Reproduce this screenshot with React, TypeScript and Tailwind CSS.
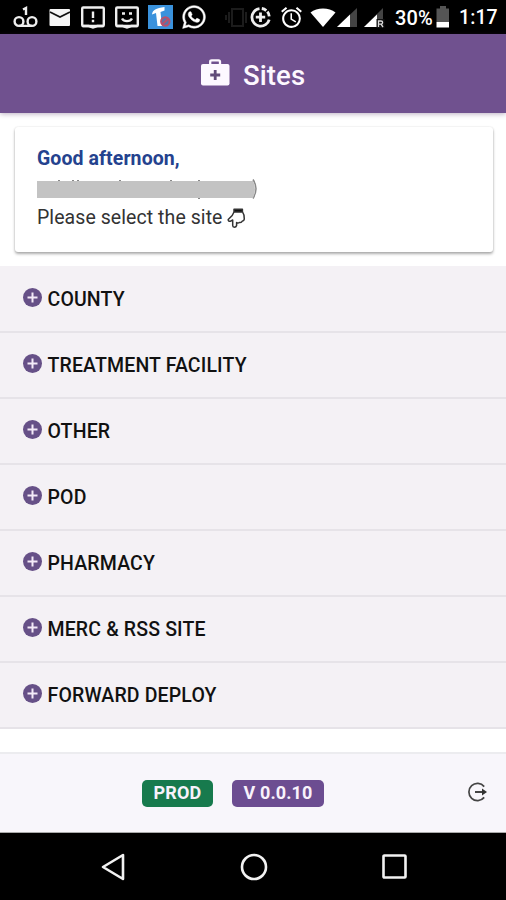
import React from "react";
import { FaWhatsapp } from "react-icons/fa";
import { MdAlarm } from "react-icons/md";

const sites = [
  "COUNTY",
  "TREATMENT FACILITY",
  "OTHER",
  "POD",
  "PHARMACY",
  "MERC & RSS SITE",
  "FORWARD DEPLOY",
];

function StatusBar() {
  return (
    <div className="flex h-[34px] shrink-0 items-center bg-black pl-[13px] text-white">
      <svg className="w-[25px] shrink-0" height="34" viewBox="0 0 25 34" fill="none" stroke="#eee" strokeWidth="2.4">
        <circle cx="6" cy="21.5" r="4.4" />
        <circle cx="19" cy="21.5" r="4.4" />
        <path d="M6 25.900h13M10 9.500l3-1.500v7" />
      </svg>
      <svg className="ml-[11px] w-[22px] shrink-0" height="34" viewBox="0 0 22 34">
        <rect x="0.5" y="9" width="20.5" height="17" rx="1" fill="#f5f5f5" />
        <path d="M1 12l10 5 10-5" stroke="#111" strokeWidth="1.8" fill="none" />
      </svg>
      <svg className="ml-[10px] w-[24px] shrink-0" height="34" viewBox="0 0 24 34" fill="none" stroke="#eee" strokeWidth="2.4">
        <rect x="1.2" y="7.500" width="21.600" height="18.500" rx="1" />
        <path d="M1.200 26h6.500l4.300 1.500 4.300-1.500h6.500" fill="#eee" />
        <path d="M12 11.500v6.500M12 19.800v2.500" />
      </svg>
      <svg className="ml-[10px] w-[24px] shrink-0" height="34" viewBox="0 0 24 34" fill="none" stroke="#eee" strokeWidth="2.4">
        <rect x="1.2" y="7.500" width="21.600" height="18.500" rx="1" />
        <path d="M1.200 26h6.500l4.300 1.500 4.300-1.500h6.500" fill="#eee" />
        <path d="M7 13.500h3M14 13.500h3M7 18.500c2 3.500 8 3.500 10 0" />
      </svg>
      <svg className="ml-[9px] w-[25px] shrink-0" height="34" viewBox="0 0 25 34">
        <rect y="5" width="25" height="24" fill="#3a92dc" />
        <path d="M4 14.500c.500-4.500 4-6.500 12.500-7.500v3.500l-4 1.500 1.500 14H9.500L8 13z" fill="#fff" />
        <circle cx="17.300" cy="21.500" r="4.200" fill="#5376ad" stroke="#b9506c" strokeWidth="2" />
        <path d="M14.500 24l5.500-5" stroke="#b9506c" strokeWidth="2" />
      </svg>
      <FaWhatsapp className="ml-[8px] shrink-0" size={26} stroke="currentColor" strokeWidth={10} />
      <svg className="ml-[18px] w-[24px] shrink-0" height="34" viewBox="0 0 24 34" fill="none" stroke="#1c1c1c" strokeWidth="2">
        <rect x="7" y="9" width="11" height="17" />
        <path d="M4 12v11M21 12v11M1 15v5" />
      </svg>
      <svg className="w-[22px] shrink-0" height="34" viewBox="0 0 22 34" fill="none" stroke="#eee" strokeWidth="2.8">
        <path d="M10.500 8.600a8.800 8.800 0 1 0 9.700 11" />
        <path d="M12.800 8.500a8.800 8.800 0 0 1 7.500 8.600" strokeDasharray="5 1.500" />
        <path d="M11.500 12.500v9.400M6.800 17.200h9.400" strokeWidth="2.800" />
      </svg>
      <MdAlarm className="ml-[8px] shrink-0" size={25} />
      <svg className="ml-[6px] w-[26px] shrink-0" height="34" viewBox="0 0 26 34">
        <path d="M0.500 12.500C7 7 19 7 25.500 12.500L13 27z" fill="#fff" />
      </svg>
      <svg className="ml-[1px] w-[21px] shrink-0" height="34" viewBox="0 0 21 34">
        <path d="M0 27L20 8v19z" fill="#444" />
        <path d="M0 27L13 14.600V27z" fill="#fff" />
      </svg>
      <svg className="ml-[6px] w-[22px] shrink-0" height="34" viewBox="0 0 22 34">
        <path d="M0 27L19 8v19z" fill="#444" />
        <path d="M0 27L13 14.600V27z" fill="#fff" />
        <rect x="12.500" y="19" width="8" height="9" fill="#111" />
        <path d="M14.500 27v-6h2.500a1.500 1.500 0 0 1 0 3.200h-2.300M17 24.200l2 2.800" fill="none" stroke="#ddd" strokeWidth="1.300" />
      </svg>
      <span className="ml-[9px] w-[39px] whitespace-nowrap pt-[2px] text-[20px] font-medium leading-[34px] tracking-[0.1px]">30%</span>
      <svg className="ml-[2px] w-[14px] shrink-0" height="34" viewBox="0 0 14 34">
        <path d="M4 6h6v2.500h3V22H0.500V8.500H4z" fill="#555" />
        <path d="M0.500 22H13v5.500H0.500z" fill="#fff" />
      </svg>
      <span className="ml-[9px] whitespace-nowrap pt-[2px] text-[19.500px] font-medium leading-[34px] tracking-[0.100px]">1:17</span>
    </div>
  );
}

function Header() {
  return (
    <header className="z-10 flex h-[79px] shrink-0 items-center bg-[#70518f] pl-[201px] pt-[4px] text-[#fdf8ff] shadow-[0_1px_5px_rgba(60,30,80,0.35)]">
      <svg width="29" height="27" viewBox="0 0 29 27" className="-mt-[6px]">
        <path d="M9.200 6V2.800Q9.200 1.300 10.700 1.300h6.800Q19 1.300 19 2.800V6" fill="none" stroke="currentColor" strokeWidth="2.300" />
        <rect y="5" width="28.500" height="21.500" rx="2" fill="currentColor" />
        <path d="M14.200 11v10M9.200 16h10" stroke="#604b79" strokeWidth="2.800" />
      </svg>
      <h1 className="ml-[13px] text-[27.500px] font-medium leading-8 tracking-[0.1px]">Sites</h1>
    </header>
  );
}

function GreetingCard() {
  return (
    <section className="ml-[15px] mr-[13px] mt-[14px] h-[125px] shrink-0 rounded-[3px] bg-white pl-[22px] pt-[17px] text-[19.500px] leading-[29px] text-[#333] shadow-[0_2px_3px_rgba(0,0,0,0.32),0_0_2px_rgba(0,0,0,0.12)]">
      <p className="text-[19.500px] font-bold leading-[29px] tracking-[0.080px] text-[#24428e]">Good afternoon,</p>
      <svg width="222" height="22" viewBox="0 0 222 22" className="mt-[6px] block">
        <path d="M216 0.500q6 9 0 19" fill="none" stroke="#888" strokeWidth="1.500" />
        <path d="M21 1.500h2M35 1.500h2M40 1.500h2M82 1.500h2M133 1.500h2M161 1.500h2M161 19.500h2" stroke="#888" />
        <rect y="2" width="216" height="17" fill="#c3c3c3" />
        <path d="M216 2q4 8 0 17z" fill="#c3c3c3" />
      </svg>
      <p className="flex items-center pt-[2px]">
        <span className="whitespace-nowrap tracking-[0.070px]">Please select the site</span>
        <svg width="19" height="20" viewBox="0 0 19 20" className="ml-[4px]" fill="none" stroke="#333" strokeWidth="1.500" strokeLinejoin="round">
          <path d="M7 4L5.200 7.500 1.200 11.500q0 2 2 1.800l2.500-1.300v5.500q0 1.700 1.700 1.700T9.600 17.500V14.500q1.500 1 2.800 0 1.800.200 2.700-1.200 2-.500 2.200-2.200.500-4-1.700-7" />
          <path d="M7 1.200h8.400V4H7z" fill="#111" />
        </svg>
      </p>
    </section>
  );
}

function SiteRow({ name }: { name: string }) {
  return (
    <li className="flex h-[66px] items-center border-b-2 border-[#e6e3e8] pl-[23px]">
      <svg width="19" height="19" viewBox="0 0 19 19" className="-mt-[3px]">
        <circle cx="9.500" cy="9.500" r="9.500" fill="#665087" />
        <path d="M9.500 4.500v10M4.500 9.500h10" stroke="#f3eaf8" strokeWidth="2" />
      </svg>
      <span className="ml-[5.500px] pt-[2px] text-[19.500px] font-medium tracking-[0.150px] text-[#111]">{name}</span>
    </li>
  );
}

function Footer() {
  return (
    <footer className="mt-[23px] flex h-[81px] shrink-0 items-center border-b border-t-2 border-b-[#aaa] border-t-[#ececef] bg-[#f8f6fb] pl-[142px] text-[18px] font-bold text-[#f8f2fb]">
      <span className="flex h-[27px] w-[71px] items-center justify-center rounded-[5px] bg-[#177a4d] pb-[2px] tracking-[0.2px]">PROD</span>
      <span className="ml-[19px] flex h-[27px] w-[92px] items-center justify-center rounded-[5px] bg-[#6c4d91] pb-[2px] tracking-[0.1px]">V 0.0.10</span>
      <svg width="20" height="20" viewBox="0 0 20 20" className="-mt-[3px] ml-[144px]" fill="none" stroke="#444" strokeWidth="1.700">
        <path d="M16.200 4.600A8.600 8.600 0 1 0 16.200 15.400" />
        <path d="M7 10h8" strokeWidth="2" />
        <path d="M14 6.500l5 3.500-5 3.500z" fill="#333" stroke="none" />
      </svg>
    </footer>
  );
}

function NavBar() {
  return (
    <nav className="flex flex-1 items-center bg-black pl-[101px]">
      <svg width="24" height="28" viewBox="0 0 24 28" fill="none" stroke="#f2f2f2" strokeWidth="2.600" strokeLinejoin="round">
        <path d="M22 2v24L2 14z" />
      </svg>
      <svg width="28" height="28" viewBox="0 0 28 28" className="ml-[115px]" fill="none" stroke="#f2f2f2" strokeWidth="2.600">
        <circle cx="14" cy="14" r="12" />
      </svg>
      <svg width="25" height="25" viewBox="0 0 25 25" className="ml-[114px]" fill="none" stroke="#f2f2f2" strokeWidth="2.600">
        <rect x="1.500" y="1.500" width="22" height="22" rx="0.800" />
      </svg>
    </nav>
  );
}

export default function App() {
  return (
    <div className="flex h-[900px] w-[506px] flex-col overflow-hidden bg-white font-[Roboto,sans-serif]">
      <StatusBar />
      <Header />
      <GreetingCard />
      <ul className="mt-[14px] shrink-0 bg-[#f4f1f5] pt-px">
        {sites.map((name) => (
          <SiteRow key={name} name={name} />
        ))}
      </ul>
      <Footer />
      <NavBar />
    </div>
  );
}
